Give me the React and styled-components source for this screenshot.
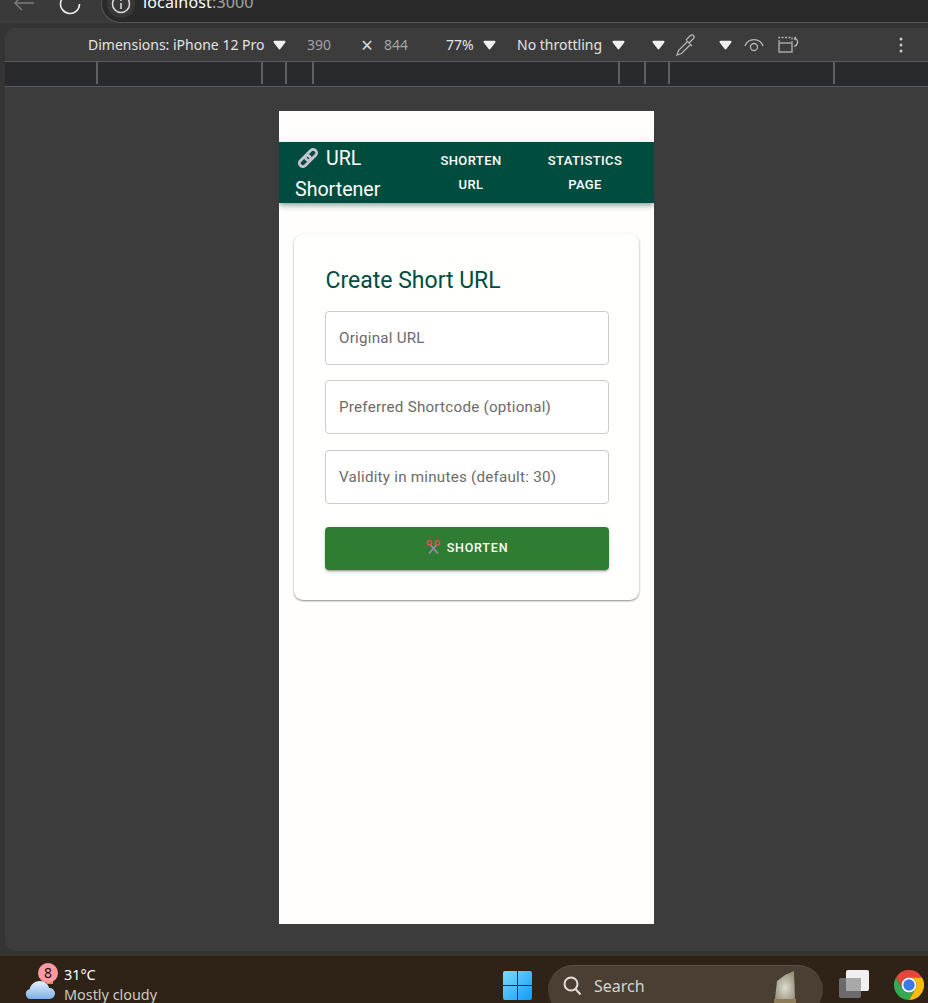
import React from "react";
import styled, { createGlobalStyle } from "styled-components";

const Global = createGlobalStyle`
  html, body { margin: 0; padding: 0; background: #353535; }
  * { box-sizing: border-box; }
`;

const Screen = styled.div`
  width: 928px; height: 1003px; overflow: hidden;
  display: flex; flex-direction: column; background: #343434;
  font-family: "Noto Sans", sans-serif;
`;
const BrowserBar = styled.div`
  height: 23px; flex: none; overflow: hidden; background: #3a3a3a;
`;
const BrowserRow = styled.div`
  height: 39px; margin-top: -16px; display: flex; align-items: center; padding-left: 13px;
`;
const NavIcon = styled.svg`
  flex: none; margin-right: ${p => p.$mr}px; color: ${p => p.$color};
`;
const UrlPill = styled.div`
  flex: 1; height: 39px; display: flex; align-items: center; gap: 8px; padding-left: 5px;
  background: #2a2a2a; border: 1px solid #555; border-right: 0;
  border-radius: 20px 0 0 20px; color: #a6a6a6; font-size: 16px; letter-spacing: .15px;
`;
const UrlText = styled.div` padding-bottom: 3px; `;
const UrlHost = styled.span` color: #fff; `;
const UrlBadge = styled.div`
  width: 28px; height: 28px; border-radius: 50%; background: #383838; flex: none;
  display: flex; align-items: center; justify-content: center;
`;
const Panel = styled.div`
  flex: none; height: 923px; margin: 5px 0 4px 5px; background: #3c3c3c;
  border-radius: 10px 0 0 10px; display: flex; flex-direction: column; overflow: hidden;
`;
const Toolbar = styled.div`
  height: 34px; flex: none; display: flex; align-items: center; padding-left: 83px;
  border-bottom: 1px solid #5c5c5c; color: #e3e3e3; font-size: 14px; line-height: 1;
`;
const ToolText = styled.span`
  flex: none; width: ${p => p.$w}px; margin-left: ${p => p.$ml || 0}px; white-space: nowrap;
  color: ${p => (p.$dim ? "#a3a3a3" : "#e3e3e3")};
`;
const TimesText = styled(ToolText)`
  font-size: 21px; color: #d8d8d8; padding-top: 2px;
`;
const Caret = styled.svg` flex: none; margin-left: ${p => p.$ml}px; `;
const ToolIcon = styled.svg` flex: none; margin-left: ${p => p.$ml}px; color: #b5b5b5; `;
const Ruler = styled.div`
  height: 25px; flex: none; display: flex; background: #292a2d; border-bottom: 1px solid #5c5c5c;
`;
const Tick = styled.div`
  width: 2px; height: 22px; background: #5f6063; flex: none; margin-left: ${p => p.$ml}px;
`;
const Stage = styled.div`
  flex: 1; display: flex; justify-content: center; align-items: flex-start; padding: 24px 0 0 0;
`;
const Phone = styled.div`
  width: 375px; height: 813px; background: #fffefc; padding-top: 31px; overflow: hidden;
  font-family: Roboto, sans-serif;
`;
const Header = styled.header`
  height: 61px; background: #004d40; color: #fff; display: flex; align-items: center; padding: 0 16px;
  box-shadow: 0 2px 4px -1px rgba(0,0,0,.25), 0 4px 5px rgba(0,0,0,.14), 0 1px 10px rgba(0,0,0,.1);
`;
const Brand = styled.div`
  flex: none; width: 115px; font-size: 19.6px; font-weight: 400; line-height: 31px; margin-top: 2px;
`;
const BrandIcon = styled.svg` vertical-align: -3px; margin: 0 8px 0 3px; `;
const HeaderLink = styled.a`
  flex: none; width: ${p => p.$w}px; margin-left: ${p => p.$ml}px; text-align: center;
  font-size: 13px; font-weight: 500; letter-spacing: .4px; line-height: 24px; text-transform: uppercase;
`;
const Card = styled.section`
  margin: 31px 15px 0; height: 366px; padding: 32px 30px 0 31px; background: #fffffe; border-radius: 9px;
  box-shadow: 0 1px 2px rgba(0,0,0,.45), 0 0 3px rgba(0,0,0,.03);
`;
const Title = styled.h2`
  margin: 0 0 15px 0.5px; color: #004d40; font-size: 23px; font-weight: 400; line-height: 30px;
`;
const Form = styled.form` display: flex; flex-direction: column; gap: 15.3px; `;
const Field = styled.input`
  height: 54px; width: 100%; padding: 0 13px; background: #fff; border: 1px solid #ccc; border-radius: 4px;
  font-family: Roboto, sans-serif; font-size: 15.2px; letter-spacing: .23px; outline: 0;
  &::placeholder { color: #6b6b6b; opacity: 1; }
`;
const Submit = styled.button`
  height: 43px; margin-top: 8.1px; padding: 0 0 2px; display: flex; align-items: center; justify-content: center; gap: 6px;
  background: #2e7d32; color: #fff; border: 0; border-radius: 4px;
  font-family: Roboto, sans-serif; font-size: 12.5px; font-weight: 500; letter-spacing: .8px;
  box-shadow: 0 3px 1px -2px rgba(0,0,0,.2), 0 2px 2px rgba(0,0,0,.14), 0 1px 5px rgba(0,0,0,.12);
`;
const Taskbar = styled.footer`
  flex: none; height: 48px; background: #2e2316; border-top: 1px solid #3f362b;
  display: flex; align-items: flex-start; overflow: hidden; padding-left: 25px; font-family: "Noto Sans", sans-serif;
`;
const Weather = styled.div`
  position: relative; flex: none; width: 39px; height: 47px; display: flex; align-items: flex-end; padding-bottom: 3px;
`;
const Badge = styled.div`
  position: absolute; left: 13px; top: 7px; width: 20px; height: 20px; border-radius: 50%;
  background: #ff99a4; color: #201010; font-size: 14px; line-height: 20px; text-align: center;
`;
const WeatherText = styled.div`
  flex: none; width: 439px; padding-top: 9px; color: #fff; font-size: 14.4px; line-height: 20px;
`;
const WeatherSub = styled.div` color: #cfcac3; `;
const StartIcon = styled.svg` flex: none; margin: 15px 16px 0 0; `;
const SearchBox = styled.div`
  flex: none; width: 275px; height: 50px; margin: 9px 16px 0 0; padding: 0 26px 0 15px;
  display: flex; align-items: flex-start; border-radius: 25px; background: #4a3f32; border-top: 1px solid #5d5244;
  color: #d8d4cd; font-size: 16px;
`;
const SearchLabel = styled.span` flex: 1; padding-top: 8px; margin-left: 12px; line-height: 24px; `;
const SearchIcon = styled.svg` flex: none; margin-top: 10px; `;
const Trophy = styled.svg` flex: none; margin-top: 5px; `;
const TaskView = styled.svg` flex: none; margin: 14px 25px 0 0; `;
const Chrome = styled.svg` flex: none; margin-top: 14px; `;

const ticks = [91, 163, 22, 25, 304, 24, 22, 163];

const CaretDown = ({ ml }) => (
  <Caret $ml={ml} width="13" height="10" viewBox="0 0 13 10">
    <path d="M1.500 1.800h10L6.500 8.500z" fill="#f0f0f0" stroke="#f0f0f0" strokeWidth="2" strokeLinejoin="round" />
  </Caret>
);

const LinkEmoji = ({ Comp }) => (
  <Comp width="20" height="20" viewBox="0 0 20 20" fill="none">
    <g stroke="#c9c3d0" strokeWidth="2.800">
      <rect x="-3.500" y="-6.500" width="7" height="13" rx="3.500" transform="translate(13 7) rotate(45)" />
      <rect x="-3.500" y="-6.500" width="7" height="13" rx="3.500" transform="translate(7 13) rotate(45)" />
    </g>
  </Comp>
);

export default function App() {
  return (
    <Screen>
      <Global />
      <BrowserBar>
        <BrowserRow>
          <NavIcon $mr={24} $color="#7c7c7c" width="22" height="18" viewBox="0 0 22 18" fill="none" stroke="currentColor" strokeWidth="1.4">
            <path d="M21 8H2M9 1 2 8l7 7" />
          </NavIcon>
          <NavIcon $mr={20} $color="#eee" width="22" height="22" viewBox="0 0 22 22" fill="none" stroke="currentColor" strokeWidth="1.6">
            <path d="M20.500 11A9.500 9.500 0 1 1 14 2" />
          </NavIcon>
          <UrlPill>
            <UrlBadge>
              <svg width="20" height="20" viewBox="0 0 20 20" fill="none" stroke="#ddd" strokeWidth="1.5">
                <circle cx="10" cy="10" r="8.500" />
                <path d="M10 9v6M10 5.500v1.600" />
              </svg>
            </UrlBadge>
            <UrlText><UrlHost>localhost</UrlHost>:3000</UrlText>
          </UrlPill>
        </BrowserRow>
      </BrowserBar>
      <Panel>
        <Toolbar>
          <ToolText $w={177}>Dimensions: iPhone 12 Pro</ToolText>
          <CaretDown ml={8} />
          <ToolText $w={24} $ml={21} $dim>390</ToolText>
          <TimesText $w={12} $ml={30}>×</TimesText>
          <ToolText $w={24} $ml={11} $dim>844</ToolText>
          <ToolText $w={28} $ml={38}>77%</ToolText>
          <CaretDown ml={9} />
          <ToolText $w={86} $ml={21}>No throttling</ToolText>
          <CaretDown ml={9} />
          <CaretDown ml={27} />
          <ToolIcon $ml={10} width="22" height="22" viewBox="0 0 22 22" fill="none" stroke="currentColor" strokeWidth="1.3">
            <path d="M12.500 7.500 3.500 16.500 2 21l4.500-1.500 9-9M11 6l6 6M14 9l4.500-4.500a2.100 2.100 0 0 0-3-3L11 6" />
          </ToolIcon>
          <CaretDown ml={22} />
          <ToolIcon $ml={12} width="20" height="14" viewBox="0 1 20 14" fill="none" stroke="currentColor" strokeWidth="1.3">
            <path d="M1 9a9.500 9.500 0 0 1 18 0" />
            <circle cx="10" cy="10" r="3.500" />
          </ToolIcon>
          <ToolIcon $ml={14} width="22" height="18" viewBox="0 0 22 18" fill="none" stroke="currentColor" strokeWidth="1.3">
            <path d="M1 6V1.500h13V6" strokeDasharray="2 1.500" />
            <rect x="1" y="7" width="13" height="9" />
            <path d="M16 2.500c3 0 4 2.500 3.500 4.500S17.500 10 16 10.500M16 2.500 18 1M16 2.500 18 4" />
          </ToolIcon>
          <ToolIcon $ml={99} width="4" height="16" viewBox="0 0 4 16" fill="#c8c8c8" stroke="none">
            <circle cx="2" cy="2" r="1.500" />
            <circle cx="2" cy="8" r="1.500" />
            <circle cx="2" cy="14" r="1.500" />
          </ToolIcon>
        </Toolbar>
        <Ruler>
          {ticks.map((ml, i) => <Tick key={i} $ml={ml} />)}
        </Ruler>
        <Stage>
          <Phone>
            <Header>
              <Brand>
                <LinkEmoji Comp={BrandIcon} />URL Shortener
              </Brand>
              <HeaderLink $w={80} $ml={21}>Shorten URL</HeaderLink>
              <HeaderLink $w={106} $ml={21}>Statistics Page</HeaderLink>
            </Header>
            <Card>
              <Title>Create Short URL</Title>
              <Form>
                <Field placeholder="Original URL" />
                <Field placeholder="Preferred Shortcode (optional)" />
                <Field placeholder="Validity in minutes (default: 30)" />
                <Submit type="button">
                  <svg width="15" height="14" viewBox="0 0 15 14" fill="none">
                    <path d="M4.500 5 12 13.500M10.500 5 3 13.500" stroke="#9a8aa0" strokeWidth="1.800" />
                    <circle cx="3.500" cy="2.800" r="2.100" stroke="#f0455c" strokeWidth="1.500" />
                    <circle cx="11.500" cy="2.800" r="2.100" stroke="#f0455c" strokeWidth="1.500" />
                  </svg>
                  SHORTEN
                </Submit>
              </Form>
            </Card>
          </Phone>
        </Stage>
      </Panel>
      <Taskbar>
        <Weather>
          <svg width="31" height="26" viewBox="0 0 31 26">
            <defs>
              <linearGradient id="cloud" x1="0" y1="0" x2="0" y2="1">
                <stop offset="0" stopColor="#e6f0fb" />
                <stop offset="1" stopColor="#7fb0ea" />
              </linearGradient>
            </defs>
            <rect x="22" y="2" width="6" height="8" fill="#e9862d" />
            <path d="M6 25a5 5 0 0 1-1.500-9.800C6 10 10 7 15 7c5 0 8 3 9 7a5.500 5.500 0 0 1 1 11z" fill="url(#cloud)" />
          </svg>
          <Badge>8</Badge>
        </Weather>
        <WeatherText>
          31°C
          <WeatherSub>Mostly cloudy</WeatherSub>
        </WeatherText>
        <StartIcon width="29" height="29" viewBox="0 0 29 29">
          <defs>
            <linearGradient id="win" x1="0" y1="0" x2="1" y2="1">
              <stop offset="0" stopColor="#7ddcff" />
              <stop offset="1" stopColor="#0c9bf5" />
            </linearGradient>
          </defs>
          <path d="M0 2a2 2 0 0 1 2-2h12v14H0zM15 0h12a2 2 0 0 1 2 2v12H15zM0 15h14v14H2a2 2 0 0 1-2-2zM15 15h14v12a2 2 0 0 1-2 2H15z" fill="url(#win)" />
        </StartIcon>
        <SearchBox>
          <SearchIcon width="19" height="20" viewBox="0 0 19 20" fill="none" stroke="#e4e0da" strokeWidth="2">
            <circle cx="8" cy="8" r="6.500" />
            <path d="m12.500 13 5 5.500" />
          </SearchIcon>
          <SearchLabel>Search</SearchLabel>
          <Trophy width="24" height="33" viewBox="0 0 24 33">
            <defs>
              <radialGradient id="glass" cx=".5" cy=".6" r=".6">
                <stop offset="0" stopColor="#dcdccf" />
                <stop offset="1" stopColor="#96927a" />
              </radialGradient>
            </defs>
            <path d="M2 28 4 10 12 4l9-4 1 28z" fill="url(#glass)" />
            <path d="M1 28h22v5H1z" fill="#8d7a58" />
          </Trophy>
        </SearchBox>
        <TaskView width="30" height="30" viewBox="0 0 30 30">
          <rect x="0" y="8" width="22" height="20" rx="2" fill="#6b6b6b" />
          <rect x="7" y="0" width="23" height="21" rx="2" fill="#f0f0f0" />
          <rect x="7" y="8" width="15" height="13" fill="#a9a9a9" />
        </TaskView>
        <Chrome width="30" height="30" viewBox="0 0 30 30">
          <path d="M15 7.500H28A15 15 0 0 0 2 7.500L8.500 18.750A7.500 7.500 0 0 1 15 7.500z" fill="#e8453c" />
          <path d="M2 7.500A15 15 0 0 0 15 30L21.500 18.750A7.500 7.500 0 0 1 8.500 18.750z" fill="#34a853" />
          <path d="M28 7.500A15 15 0 0 1 15 30L21.500 18.750A7.500 7.500 0 0 0 15 7.500z" fill="#fbbc05" />
          <circle cx="15" cy="15" r="7.500" fill="#fff" />
          <circle cx="15" cy="15" r="5.700" fill="#3b78e7" />
        </Chrome>
      </Taskbar>
    </Screen>
  );
}
